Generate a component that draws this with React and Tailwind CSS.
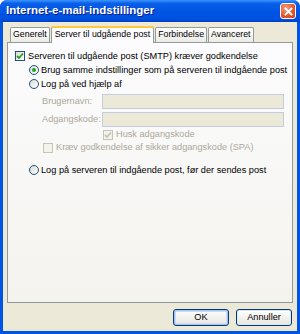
import React from 'react'

const font = { fontFamily: '"Liberation Sans", Arial, sans-serif' }

function Check({ checked, disabled }) {
  return (
    <span
      className={`flex h-[10px] w-[10px] shrink-0 items-center justify-center border ${
        disabled ? 'border-[#c7c5b2] bg-[#f3f2ec]' : 'border-[#1c5180] bg-gradient-to-br from-[#dcdbd5] to-white'
      }`}
    >
      {checked && (
        <svg width="8" height="8" viewBox="0 0 8 8">
          <path d="M1 4 L3 6 L7 1.5" fill="none" stroke={disabled ? '#c7c5b2' : '#21a121'} strokeWidth="1.8" />
        </svg>
      )}
    </span>
  )
}

function Radio({ checked }) {
  return (
    <span className="flex h-[10px] w-[10px] shrink-0 items-center justify-center rounded-full border border-[#1c5180] bg-gradient-to-br from-[#dcdbd5] to-white">
      {checked && <span className="h-[4px] w-[4px] rounded-full bg-[#21a121]" />}
    </span>
  )
}

function Tab({ label, active }) {
  if (active) {
    return (
      <div className="relative z-10 -mb-px flex h-[17px] items-center rounded-t-[3px] border border-b-0 border-[#919b9c] bg-[#fcfcfe] px-[3px] text-[8.8px] text-black">
        <span className="absolute -left-px -right-px -top-px h-[2px] rounded-t-[3px] bg-[#ffc83c]" />
        {label}
      </div>
    )
  }
  return (
    <div className="flex h-[15px] items-center rounded-t-[2px] border border-b-0 border-[#919b9c] bg-gradient-to-b from-white to-[#ecebe6] px-[2px] text-[8.8px] text-black">
      {label}
    </div>
  )
}

function Button({ children, focus }) {
  return (
    <button
      className={`h-[17px] w-[56px] rounded-[3px] border border-[#003c74] bg-gradient-to-b from-white to-[#e6e5dd] text-[9.2px] text-black ${
        focus ? 'shadow-[inset_0_0_0_1px_#a5c2f0,inset_0_0_0_2px_#cfdcf5]' : 'shadow-[inset_0_0_0_1px_#dce6f5]'
      }`}
    >
      {children}
    </button>
  )
}

export default function App() {
  return (
    <div style={font} className="flex h-[334px] w-[300px] flex-col overflow-hidden rounded-t-[7px] bg-[#0054e3]">
      {/* titel */}
      <div className="flex h-[22px] shrink-0 items-center justify-between bg-[linear-gradient(to_bottom,#3d95ff_0%,#0a5fe8_15%,#0055e5_50%,#0052e0_85%,#003fc8_100%)] pl-[6px] pr-[4px]">
        <span className="text-[11.5px] font-bold text-white [text-shadow:1px_1px_0_#0a1e87]">Internet-e-mail-indstillinger</span>
        <span className="flex h-[16px] w-[16px] items-center justify-center rounded-[3px] border border-white bg-[radial-gradient(circle_at_35%_30%,#f2a07d,#e2542b_60%,#c0401c)]">
          <svg width="9" height="9" viewBox="0 0 9 9">
            <path d="M1.5 1.5 L7.5 7.5 M7.5 1.5 L1.5 7.5" stroke="white" strokeWidth="1.8" strokeLinecap="square" />
          </svg>
        </span>
      </div>

      <div className="mx-[3px] mb-[3px] flex flex-1 flex-col bg-[#ece9d8] px-[4px] pt-[4px]">
        {/* faner */}
        <div className="flex items-end gap-[1px] pl-[3px]">
          <Tab label="Generelt" />
          <Tab label="Server til udgående post" active />
          <Tab label="Forbindelse" />
          <Tab label="Avanceret" />
        </div>

        {/* panel */}
        <div className="flex h-[261px] flex-col whitespace-nowrap border border-[#919b9c] bg-gradient-to-b from-[#fcfcfe] to-[#f4f3ee] px-[7px] pt-[6px] text-[9.2px] leading-[11px] text-black">
          <div className="flex h-[14px] items-center gap-[3px]">
            <Check checked />
            <span>Serveren til udgående post (SMTP) kræver godkendelse</span>
          </div>

          <div className="flex flex-col pl-[14px]">
            <div className="flex h-[14px] items-center gap-[2px]">
              <Radio checked />
              <span>Brug samme indstillinger som på serveren til indgående post</span>
            </div>
            <div className="flex h-[14px] items-center gap-[2px]">
              <Radio />
              <span>Log på ved hjælp af</span>
            </div>
          </div>

          <div className="mt-[3px] flex flex-col pl-[27px] pr-[1px] text-[#aca899]">
            <div className="flex h-[15px] items-center">
              <span className="w-[60px]">Brugernavn:</span>
              <span className="h-[15px] flex-1 border border-[#c2cde0] bg-[#ece9d8]" />
            </div>
            <div className="mt-[3px] flex h-[15px] items-center">
              <span className="w-[60px]">Adgangskode:</span>
              <span className="h-[15px] flex-1 border border-[#c2cde0] bg-[#ece9d8]" />
            </div>
            <div className="mt-[1px] flex h-[13px] items-center gap-[3px] pl-[61px]">
              <Check checked disabled />
              <span>Husk adgangskode</span>
            </div>
            <div className="flex h-[13px] items-center gap-[3px] pl-[1px]">
              <Check disabled />
              <span>Kræv godkendelse af sikker adgangskode (SPA)</span>
            </div>
          </div>

          <div className="mt-[9px] flex h-[14px] items-center gap-[2px] pl-[14px]">
            <Radio />
            <span>Log på serveren til indgående post, før der sendes post</span>
          </div>
        </div>

        {/* knapper */}
        <div className="flex justify-end gap-[7px] pr-[1px] pt-[6px]">
          <Button focus>OK</Button>
          <Button>Annuller</Button>
        </div>
      </div>
    </div>
  )
}
